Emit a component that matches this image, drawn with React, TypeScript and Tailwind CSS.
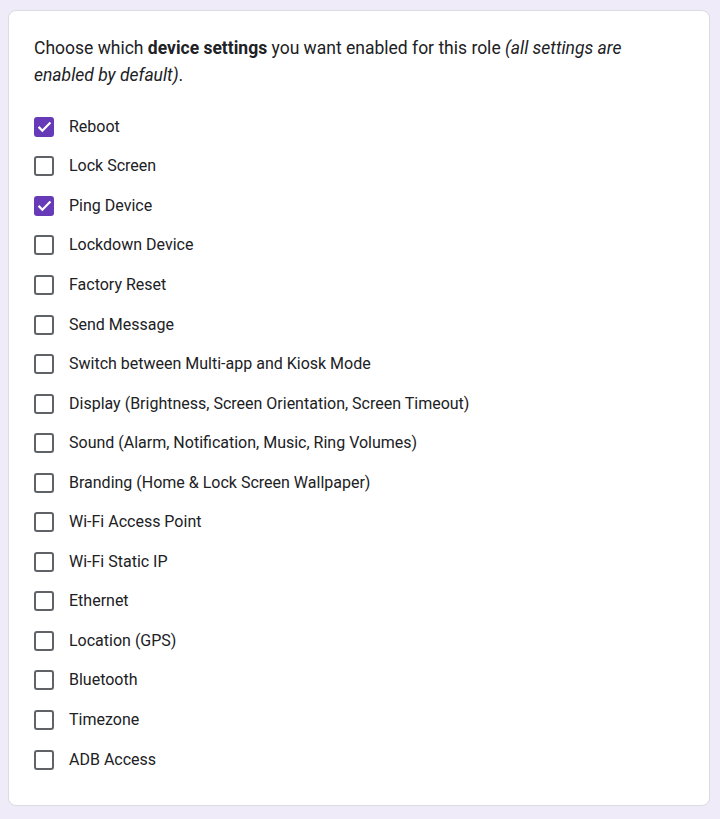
import React, { useState } from "react";

const settings: { label: string; checked: boolean }[] = [
  { label: "Reboot", checked: true },
  { label: "Lock Screen", checked: false },
  { label: "Ping Device", checked: true },
  { label: "Lockdown Device", checked: false },
  { label: "Factory Reset", checked: false },
  { label: "Send Message", checked: false },
  { label: "Switch between Multi-app and Kiosk Mode", checked: false },
  { label: "Display (Brightness, Screen Orientation, Screen Timeout)", checked: false },
  { label: "Sound (Alarm, Notification, Music, Ring Volumes)", checked: false },
  { label: "Branding (Home & Lock Screen Wallpaper)", checked: false },
  { label: "Wi-Fi Access Point", checked: false },
  { label: "Wi-Fi Static IP", checked: false },
  { label: "Ethernet", checked: false },
  { label: "Location (GPS)", checked: false },
  { label: "Bluetooth", checked: false },
  { label: "Timezone", checked: false },
  { label: "ADB Access", checked: false },
];

function Checkbox({ checked }: { checked: boolean }) {
  if (checked) {
    return (
      <span className="flex h-5 w-5 shrink-0 items-center justify-center rounded-[3px] bg-[#673ab7]">
        <svg viewBox="0 0 24 24" className="h-[19px] w-[19px]" fill="none" stroke="white" strokeWidth="2.8">
          <path d="M4.5 12.5l4.8 4.8L19.5 7" />
        </svg>
      </span>
    );
  }
  return <span className="h-5 w-5 shrink-0 rounded-[3px] border-[2.5px] border-[#5f6368] bg-white" />;
}

export default function App() {
  const [items, setItems] = useState(settings);

  const toggle = (i: number) =>
    setItems((prev) => prev.map((s, idx) => (idx === i ? { ...s, checked: !s.checked } : s)));

  return (
    <div
      className="min-h-screen bg-[#f0ebf8] pt-[10px] pl-2"
      style={{ fontFamily: "Roboto, 'Liberation Sans', sans-serif" }}
    >
      <div className="h-[796px] w-[702px] rounded-lg border border-[#dadce0] bg-white pl-[25px] pr-6 pt-6 pb-7 text-[#202124]">
        <p className="max-w-[640px] text-[17.5px] leading-[27px]">
          Choose which <b className="font-bold">device settings</b> you want enabled for this role{" "}
          <i>(all settings are enabled by default)</i>.
        </p>
        <div className="mt-[18px] flex flex-col">
          {items.map((s, i) => (
            <label
              key={s.label}
              className="flex h-[39.56px] cursor-pointer items-center gap-[15px]"
              onClick={() => toggle(i)}
            >
              <Checkbox checked={s.checked} />
              <span className="text-base">{s.label}</span>
            </label>
          ))}
        </div>
      </div>
    </div>
  );
}
